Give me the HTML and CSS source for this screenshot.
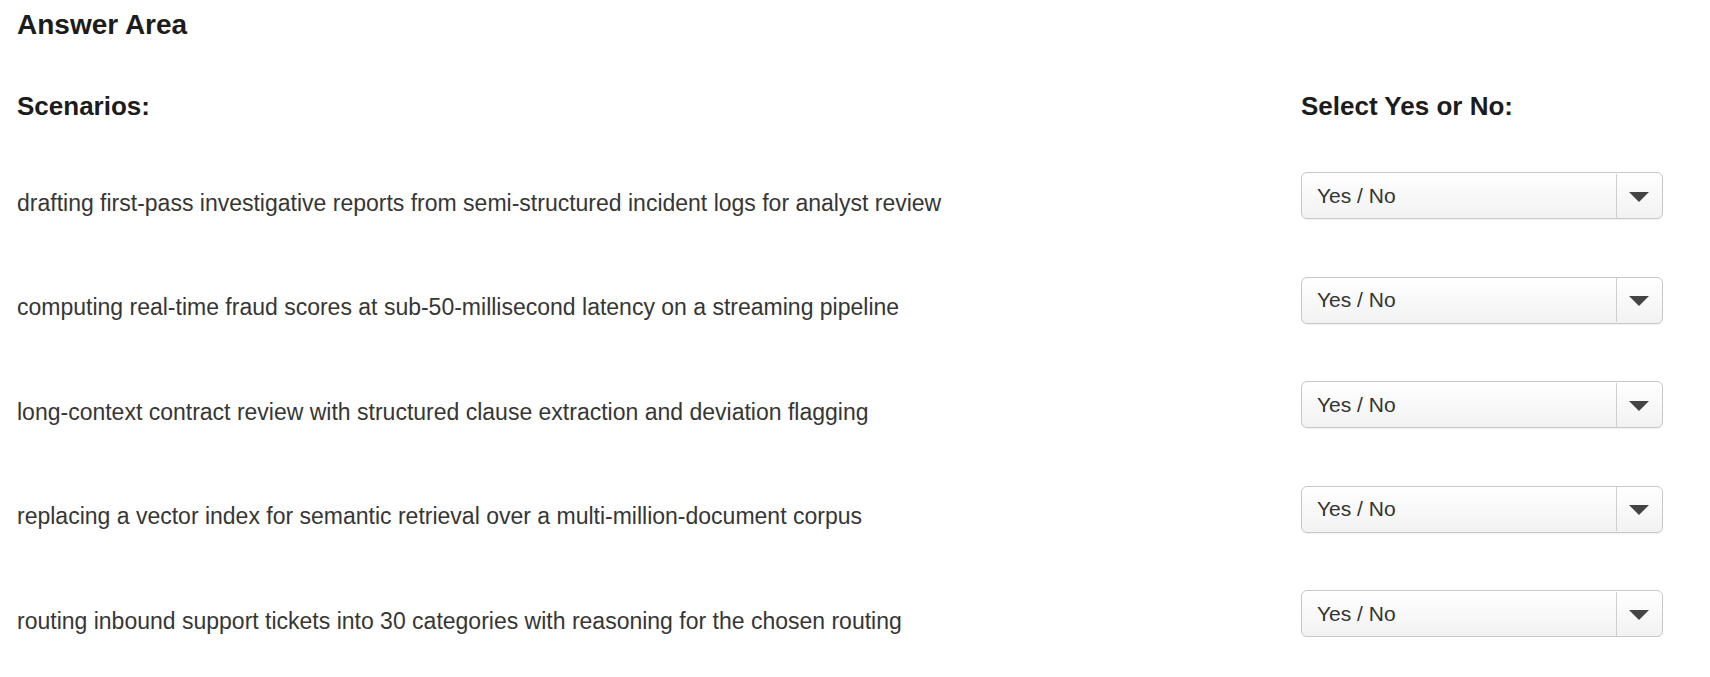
FILE: index.html
```html
<!DOCTYPE html>
<html lang="en">

<head>
  <meta charset="UTF-8">
  <meta name="viewport" content="width=device-width, initial-scale=1.0">
  <title>Answer Area</title>
  <link rel="stylesheet" href="styles.css">
</head>

<body>
  <div class="answer-area">
    <h2 class="area-title">Answer Area</h2>

    <div class="row header-row">
      <h3 class="column-title">Scenarios:</h3>
      <h3 class="column-title">Select Yes or No:</h3>
    </div>

    <div class="scenario-list">
      <div class="row scenario">
        <p class="scenario-text">drafting first-pass investigative reports from semi-structured incident logs for analyst review</p>
        <div class="picker">
          <select class="picker-select">
            <option>Yes / No</option>
            <option>Yes</option>
            <option>No</option>
          </select>
          <span class="picker-caret"></span>
        </div>
      </div>
      <div class="row scenario">
        <p class="scenario-text">computing real-time fraud scores at sub-50-millisecond latency on a streaming pipeline</p>
        <div class="picker">
          <select class="picker-select">
            <option>Yes / No</option>
            <option>Yes</option>
            <option>No</option>
          </select>
          <span class="picker-caret"></span>
        </div>
      </div>
      <div class="row scenario">
        <p class="scenario-text">long-context contract review with structured clause extraction and deviation flagging</p>
        <div class="picker">
          <select class="picker-select">
            <option>Yes / No</option>
            <option>Yes</option>
            <option>No</option>
          </select>
          <span class="picker-caret"></span>
        </div>
      </div>
      <div class="row scenario">
        <p class="scenario-text">replacing a vector index for semantic retrieval over a multi-million-document corpus</p>
        <div class="picker">
          <select class="picker-select">
            <option>Yes / No</option>
            <option>Yes</option>
            <option>No</option>
          </select>
          <span class="picker-caret"></span>
        </div>
      </div>
      <div class="row scenario">
        <p class="scenario-text">routing inbound support tickets into 30 categories with reasoning for the chosen routing</p>
        <div class="picker">
          <select class="picker-select">
            <option>Yes / No</option>
            <option>Yes</option>
            <option>No</option>
          </select>
          <span class="picker-caret"></span>
        </div>
      </div>
    </div>
  </div>
</body>

</html>
```

FILE: styles.css
```css
body {
  margin: 0;
  padding: 9px 47px 0 17px;
  background-color: #ffffff;
  font-family: "Liberation Sans", Arial, Helvetica, sans-serif;
  color: #333333;
}

.area-title {
  margin: 0;
  font-size: 28px;
  line-height: 32px;
  font-weight: bold;
  color: #1c1c1c;
}

.row {
  display: grid;
  grid-template-columns: 1fr 362px;
}

.header-row {
  margin-top: 50px;
  margin-bottom: 51px;
}

.column-title {
  margin: 0;
  font-size: 26px;
  line-height: 30px;
  font-weight: bold;
  color: #1c1c1c;
}

.scenario-list {
  display: flex;
  flex-direction: column;
  gap: 57.5px;
}

.scenario-text {
  margin: 0;
  padding-top: 17.5px;
  font-size: 23px;
  line-height: 27px;
  color: #363636;
}

/* dropdown: native select with the caret box drawn on top */
.picker {
  position: relative;
  height: 47px;
}

.picker-select {
  appearance: none;
  -webkit-appearance: none;
  width: 100%;
  height: 47px;
  margin: 0;
  padding: 0 60px 0 15px;
  border: 1.5px solid #c8c8c8;
  border-radius: 6px;
  background: linear-gradient(#ffffff, #f2f2f2);
  font-family: "Liberation Sans", Arial, Helvetica, sans-serif;
  font-size: 21px;
  line-height: 44px;
  color: #333333;
  box-shadow: 0 1px 1px rgba(0, 0, 0, 0.06);
}

.picker-caret {
  position: absolute;
  top: 1.5px;
  right: 1.5px;
  bottom: 1.5px;
  width: 45px;
  border-left: 1.5px solid #cfcfcf;
  pointer-events: none;
}

.picker-caret::after {
  content: "";
  position: absolute;
  left: 12px;
  top: 18px;
  border-left: 10px solid transparent;
  border-right: 10px solid transparent;
  border-top: 10px solid #444444;
}
```
